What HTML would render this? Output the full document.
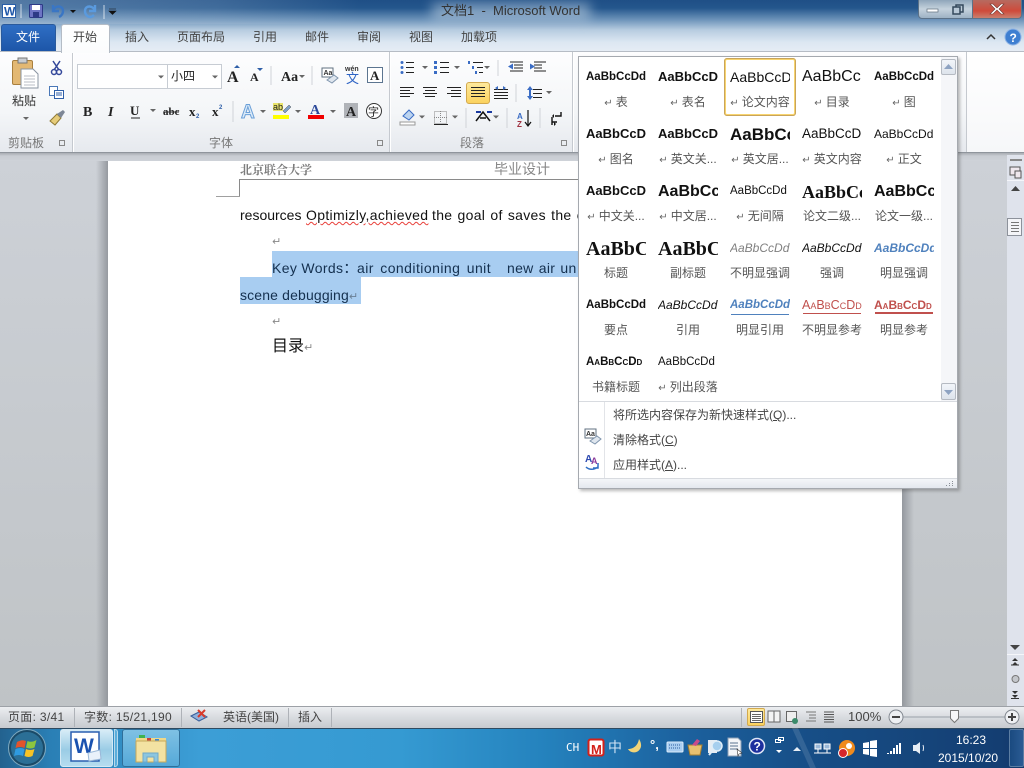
<!DOCTYPE html>
<html><head><meta charset="utf-8"><style>
html,body{margin:0;padding:0;width:1024px;height:768px;overflow:hidden;background:#c8ccd2}
body{position:relative;font-family:"Liberation Sans","Noto Sans CJK SC",sans-serif;font-size:12px;color:#444}
.a{position:absolute}
.t{position:absolute;white-space:nowrap;line-height:16px}
.c{position:absolute;white-space:nowrap;line-height:16px;text-align:center;width:72px;color:#555;font-size:12px;overflow:hidden}
.c i{font-style:normal;color:#666;font-size:10px;font-family:"DejaVu Sans",sans-serif;margin-right:3px}
.s{position:absolute;white-space:nowrap;overflow:hidden;width:60px;height:22px;line-height:22px;color:#111}
.sv{position:absolute;left:0;top:0;font-family:"Liberation Sans","Noto Sans CJK SC",sans-serif}
</style></head><body>
<!-- title/tab area -->
<div class="a" style="left:0;top:0;width:1024px;height:52px;background:linear-gradient(180deg,#1f4f86 0,#24568c 8px,#6f95bb 20px,#b7cce0 30px,#dce7f2 42px,#e6edf5 52px)"></div>
<div class="a" style="left:0;top:0;width:360px;height:24px;background:linear-gradient(90deg,rgba(180,200,220,.35),rgba(180,200,220,.2) 60%,rgba(180,200,220,0))"></div>
<div class="a" style="left:432px;top:3px;width:158px;height:17px;background:rgba(200,216,232,.55);filter:blur(6px)"></div>
<div class="t" style="left:441px;top:3px;font-size:13px;color:#333">文档1 &nbsp;-&nbsp; Microsoft Word</div>
<!-- window buttons -->
<div class="a" style="left:918px;top:-1px;width:27px;height:18px;border:1px solid #5c7288;border-radius:0 0 0 4px;background:linear-gradient(180deg,#8fa5ba,#c5d2dd 50%,#9eb2c4)"></div>
<div class="a" style="left:946px;top:-1px;width:26px;height:18px;border:1px solid #5c7288;border-left:0;background:linear-gradient(180deg,#8fa5ba,#c5d2dd 50%,#9eb2c4)"></div>
<div class="a" style="left:973px;top:-1px;width:48px;height:18px;border:1px solid #5c7288;border-left:0;border-radius:0 0 4px 0;background:linear-gradient(180deg,#b66a60,#cf4a3a 60%,#c9806f)"></div>
<!-- tabs -->
<div class="a" style="left:1px;top:24px;width:55px;height:27px;border-radius:3px 3px 0 0;background:linear-gradient(180deg,#2f6ec4,#1d56a8);border:1px solid #2a5a9c;border-bottom:0;box-sizing:border-box"></div>
<div class="a" style="left:61px;top:24px;width:49px;height:29px;border-radius:3px 3px 0 0;background:linear-gradient(180deg,#fff,#fbfcfd);border:1px solid #b4bcc6;border-bottom:0;box-sizing:border-box;z-index:3"></div>
<div class="t" style="left:16px;top:29px;color:#fff;font-size:12px">文件</div>
<div class="t" style="left:73px;top:29px;z-index:4">开始</div>
<div class="t" style="left:125px;top:29px">插入</div>
<div class="t" style="left:177px;top:29px">页面布局</div>
<div class="t" style="left:253px;top:29px">引用</div>
<div class="t" style="left:305px;top:29px">邮件</div>
<div class="t" style="left:357px;top:29px">审阅</div>
<div class="t" style="left:409px;top:29px">视图</div>
<div class="t" style="left:461px;top:29px">加载项</div>
<!-- ribbon -->
<div class="a" style="left:0;top:51px;width:1024px;height:102px;box-sizing:border-box;border-top:1px solid #b6bcc5;border-bottom:1px solid #8f959c;background:linear-gradient(180deg,#fdfdfe,#f4f6f8 60%,#e6e9ee)"></div>
<div class="a" style="left:0;top:153px;width:1024px;height:8px;background:linear-gradient(180deg,#a9adb3,#c8ccd2 3px,#ced2d8)"></div>
<div class="a" style="left:72px;top:52px;width:1px;height:100px;background:#c5c9cf;box-shadow:1px 0 0 #fff"></div>
<div class="a" style="left:389px;top:52px;width:1px;height:100px;background:#c5c9cf;box-shadow:1px 0 0 #fff"></div>
<div class="a" style="left:572px;top:52px;width:1px;height:100px;background:#c5c9cf;box-shadow:1px 0 0 #fff"></div>
<div class="a" style="left:966px;top:52px;width:1px;height:100px;background:#c5c9cf"></div>
<div class="a" style="left:967px;top:52px;width:57px;height:100px;background:linear-gradient(180deg,#fff,#f6f7f9)"></div>
<div class="t" style="left:8px;top:135px;color:#777">剪贴板</div>
<div class="t" style="left:209px;top:135px;color:#777">字体</div>
<div class="t" style="left:460px;top:135px;color:#777">段落</div>
<div class="t" style="left:12px;top:93px;color:#333">粘贴</div>
<div class="a" style="left:77px;top:64px;width:145px;height:25px;box-sizing:border-box;border:1px solid #c7ccd3;background:#fff"></div>
<div class="a" style="left:167px;top:64px;width:1px;height:25px;background:#c7ccd3"></div>
<div class="t" style="left:171px;top:68px;color:#222">小四</div>
<div class="a" style="left:466px;top:82px;width:24px;height:22px;box-sizing:border-box;border:1px solid #d2a94f;border-radius:3px;background:linear-gradient(180deg,#fde99c,#fbd25e)"></div>

<!-- document -->
<div class="a" style="left:0;top:161px;width:1007px;height:545px;background:linear-gradient(180deg,#cdd1d7,#bfc3c6)"></div>
<div class="a" style="left:96px;top:161px;width:12px;height:545px;background:linear-gradient(90deg,rgba(150,154,160,0),rgba(140,144,150,.85))"></div>
<div class="a" style="left:902px;top:161px;width:12px;height:545px;background:linear-gradient(270deg,rgba(150,154,160,0),rgba(140,144,150,.85))"></div>
<div class="a" style="left:108px;top:161px;width:794px;height:545px;background:#fff"></div>
<div class="a" style="left:272px;top:251px;width:320px;height:26px;background:#a8cdf1"></div>
<div class="a" style="left:240px;top:277px;width:121px;height:27px;background:#a8cdf1"></div>
<div class="t" style="left:240px;top:162px;font:bold 12px/16px 'Noto Serif CJK SC',serif;color:#7c7c7c">北京联合大学</div>
<div class="t" style="left:494px;top:161px;font-size:14px;color:#888">毕业设计</div>
<div class="a" style="left:239px;top:179px;width:663px;height:1px;background:#8a8a8a"></div>
<div class="a" style="left:239px;top:179px;width:1px;height:18px;background:#8a8a8a"></div>
<div class="a" style="left:216px;top:196px;width:24px;height:1px;background:#a0a0a0"></div>
<div class="t" style="left:240px;top:207px;font-size:14px;color:#111">resources</div>
<div class="t" style="left:306px;top:207px;font-size:14px;color:#111;letter-spacing:.33px;text-decoration:underline wavy #e8403a;text-decoration-thickness:1px">Optimizly,achieved</div>
<div class="t" style="left:432px;top:207px;font-size:14px;color:#111;letter-spacing:.3px;word-spacing:1px">the goal of saves the e</div>
<div class="t" style="left:272px;top:260px;font-size:14px;color:#14304f;letter-spacing:.35px">Key Words：</div>
<div class="t" style="left:357px;top:260px;font-size:14px;color:#14304f;letter-spacing:.45px;word-spacing:2px">air conditioning unit</div>
<div class="t" style="left:507px;top:260px;font-size:14px;color:#14304f;letter-spacing:.3px;word-spacing:1px">new air un</div>
<div class="t" style="left:240px;top:287px;font-size:14px;color:#14304f;letter-spacing:.15px">scene debugging<span style="font:11px 'DejaVu Sans',sans-serif;color:#6a7f95;letter-spacing:0">↵</span></div>
<div class="t" style="left:272px;top:339px;font-size:16px;color:#111">目录<span style="font:11px 'DejaVu Sans',sans-serif;color:#888">↵</span></div>
<div class="t" style="left:272px;top:234px;font:11px/16px 'DejaVu Sans',sans-serif;color:#888">↵</div>
<div class="t" style="left:272px;top:314px;font:11px/16px 'DejaVu Sans',sans-serif;color:#888">↵</div>

<!-- right scrollbar -->
<div class="a" style="left:1007px;top:155px;width:17px;height:551px;background:#dfe3ec"></div>
<div class="a" style="left:1007px;top:218px;width:15px;height:18px;box-sizing:border-box;border:1px solid #8d929b;background:#f4f5f8"></div>
<div class="a" style="left:1007px;top:180px;width:17px;height:1px;background:#f5f6fa"></div>
<div class="a" style="left:1007px;top:654px;width:17px;height:1px;background:#f5f6fa"></div>

<!-- status bar -->
<div class="a" style="left:0;top:706px;width:1024px;height:22px;box-sizing:border-box;border-top:1px solid #9da1a7;background:linear-gradient(180deg,#eceef1,#dadde1 45%,#c7cacf)"></div>
<div class="t" style="left:8px;top:709px;letter-spacing:.3px">页面: 3/41</div>
<div class="t" style="left:84px;top:709px;letter-spacing:.3px">字数: 15/21,190</div>
<div class="t" style="left:223px;top:709px">英语(美国)</div>
<div class="t" style="left:298px;top:709px">插入</div>
<div class="t" style="left:848px;top:709px;font-size:13px">100%</div>
<div class="a" style="left:74px;top:708px;width:1px;height:19px;background:#aeb2b8"></div>
<div class="a" style="left:181px;top:708px;width:1px;height:19px;background:#aeb2b8"></div>
<div class="a" style="left:288px;top:708px;width:1px;height:19px;background:#aeb2b8"></div>
<div class="a" style="left:331px;top:708px;width:1px;height:19px;background:#aeb2b8"></div>
<div class="a" style="left:741px;top:708px;width:1px;height:19px;background:#aeb2b8"></div>
<div class="a" style="left:747px;top:708px;width:18px;height:18px;box-sizing:border-box;border:1px solid #d2a94f;border-radius:2px;background:linear-gradient(180deg,#fde99c,#fbd25e)"></div>

<!-- taskbar -->
<div class="a" style="left:0;top:728px;width:1024px;height:40px;background:linear-gradient(90deg,#23628f 0,#2a7fb5 50px,#3c9ed6 200px,#359ad2 400px,#2583be 540px,#1c629f 680px,#174f88 800px,#143e72 1000px,#12386a 1024px)"></div>
<div class="a" style="left:0;top:728px;width:1024px;height:1px;background:#2f4a60"></div>
<div class="a" style="left:60px;top:729px;width:53px;height:38px;box-sizing:border-box;border:1px solid #d5e9f5;border-radius:3px;background:linear-gradient(180deg,#d7ecf7,#9acce5 55%,#b5dcef)"></div>
<div class="a" style="left:122px;top:729px;width:58px;height:38px;box-sizing:border-box;border:1px solid #2f6f9a;border-radius:3px;background:linear-gradient(180deg,#7fc1e4,#55a9d8)"></div>
<div class="a" style="left:114px;top:729px;width:4px;height:38px;box-sizing:border-box;border:1px solid #b5d8ec;border-radius:0 3px 3px 0;background:#5aaedb"></div>
<div class="a" style="left:1009px;top:729px;width:15px;height:38px;box-sizing:border-box;border:1px solid #5c7ea3;border-radius:2px;background:linear-gradient(90deg,#1a4a80,#2a5b93)"></div>
<div class="t" style="left:566px;top:740px;font:11px/16px 'DejaVu Sans Mono',monospace;color:#fff">CH</div>
<div class="t" style="left:608px;top:739px;font-size:14px;color:#cfe3f5">中</div>
<div class="t" style="left:650px;top:737px;font-size:13px;color:#fff;font-weight:bold">°,</div>
<div class="t" style="left:956px;top:732px;font-size:12px;color:#fff">16:23</div>
<div class="t" style="left:938px;top:750px;font-size:12px;color:#fff">2015/10/20</div>

<!-- icons -->
<svg class="sv" width="1024" height="768" viewBox="0 0 1024 768" style="pointer-events:none">
 <!-- QAT -->
 <rect x="2.5" y="4.5" width="13" height="13" fill="#fff" stroke="#2a5fa8"/><text x="4" y="15.5" font-size="12" font-weight="bold" fill="#1d56a8">W</text>
 <line x1="21" y1="4" x2="21" y2="18" stroke="#fff" opacity=".7"/>
 <rect x="29.5" y="4.5" width="13" height="13" rx="1" fill="#6d74c4" stroke="#2d3a86"/><rect x="32" y="5" width="8" height="5" fill="#fff"/><rect x="33" y="12" width="6" height="5" fill="#2d3a86"/>
 <path d="M53 5v6h6M53 11c2-6 10-6 10 0 0 3-2 5-4 6" fill="none" stroke="#3a76c4" stroke-width="2.4"/>
 <path d="M70 10h6l-3 3z" fill="#111"/>
 <path d="M95 5v6h-6M95 11c-2-6-10-6-10 0 0 4 3 6 5 6s3-1 4-2" fill="none" stroke="#5a9ade" stroke-width="2.4"/>
 <line x1="104" y1="5" x2="104" y2="19" stroke="#fff" opacity=".7"/>
 <path d="M109 9h7M109 11h7l-3.500 3.500z" fill="#111" stroke="#111" stroke-width=".6"/>
 <!-- window button glyphs -->
 <rect x="927" y="9" width="11" height="3" fill="#fff" stroke="#5d6d7c" stroke-width=".7"/>
 <rect x="956" y="5" width="7" height="7" fill="none" stroke="#34495c" stroke-width="1.5"/><rect x="953" y="7" width="7" height="7" fill="#b8c8d6" stroke="#34495c" stroke-width="1.500"/>
 <path d="M993 4l4 4 4-4h3l-5 5 5 5h-3l-4-4-4 4h-3l5-5-5-5z" fill="#fff" stroke="#6b3a34" stroke-width=".6"/>
 <!-- help -->
 <path d="M987 39l4-4 4 4" fill="none" stroke="#333" stroke-width="1.500"/>
 <circle cx="1013" cy="37" r="8" fill="#3f7fd1" stroke="#8fb4e5"/><text x="1009.500" y="42" font-size="12" font-weight="bold" fill="#fff">?</text>
 <!-- paste -->
 <rect x="12.500" y="60.500" width="20" height="24" rx="1.500" fill="#e3b873" stroke="#a97f3d"/><rect x="18" y="58" width="9" height="5" fill="#c9cdd2" stroke="#777"/>
 <path d="M21 69h12l5 5v14H21z" fill="#fff" stroke="#8a94a2"/><path d="M24 76h11M24 79h11M24 82h11M24 85h11" stroke="#b8bec6"/>
 <path d="M23 117h6l-3 3z" fill="#666"/>
 <!-- cut copy painter -->
 <path d="M53 61l6 9M60 61l-6 9" stroke="#33479a" stroke-width="1.500"/><circle cx="54" cy="72" r="2.500" fill="none" stroke="#33479a" stroke-width="1.500"/><circle cx="59" cy="72" r="2.500" fill="none" stroke="#33479a" stroke-width="1.500"/>
 <rect x="49.500" y="86.500" width="8" height="9" fill="#fff" stroke="#4a78b8"/><rect x="54.500" y="90.500" width="9" height="8" fill="#fff" stroke="#2f5fa8"/><path d="M56 93h6M56 95h6" stroke="#2f5fa8"/>
 <path d="M50 121l7-7 4 4-6 7z" fill="#e6cc7a" stroke="#8f7a35"/><path d="M57 114l6-4 2 2-4 6z" fill="#7d8796"/>
 <!-- font boxes arrows -->
 <path d="M158 75.500h6l-3 3z" fill="#666"/><path d="M212 75.500h6l-3 3z" fill="#666"/>
 <g font-family="Liberation Serif" font-weight="bold" fill="#222">
  <text x="227" y="82" font-size="16">A</text>
  <text x="250" y="81" font-size="12">A</text>
  <text x="281" y="81" font-size="14">Aa</text>
  <text x="83" y="116" font-size="14">B</text>
  <text x="108" y="116" font-size="14" font-style="italic">I</text>
  <text x="130" y="115" font-size="13">U</text>
  <text x="163" y="115" font-size="11">abc</text>
  <text x="189" y="116" font-size="13">x</text>
  <text x="212" y="116" font-size="13">x</text>
 </g>
 <path d="M234 68l3-3 3 3z" fill="#2f5fa8"/><path d="M257 69l3 3 3-3z" fill="#2f5fa8" transform="translate(0,-1)"/>
 <path d="M299 75h6l-3 3z" fill="#666"/>
 <line x1="271" y1="66" x2="271" y2="85" stroke="#d0d3d8"/><line x1="312" y1="66" x2="312" y2="85" stroke="#d0d3d8"/>
 <line x1="131" y1="118" x2="140" y2="118" stroke="#222"/><path d="M150 109h6l-3 3z" fill="#666"/><line x1="163" y1="112" x2="179" y2="112" stroke="#333"/>
 <text x="196" y="118" font-size="6" fill="#2f5fa8" font-weight="bold">2</text><text x="219" y="109" font-size="6" fill="#2f5fa8" font-weight="bold">2</text>
 <line x1="233" y1="101" x2="233" y2="122" stroke="#d0d3d8"/>
 <text x="241" y="118" font-size="19" font-weight="bold" fill="#dcebf8" stroke="#6a9fd8">A</text>
 <path d="M260 110h6l-3 3z" fill="#666"/>
 <rect x="273" y="103" width="10" height="8" fill="#e8e36a"/><text x="273" y="110" font-size="9" fill="#222">ab</text><path d="M283 111l6-6 2 2-6 6z" fill="#7da0c8" stroke="#555" stroke-width=".5"/><rect x="273" y="115" width="16" height="4" fill="#ffff00"/>
 <path d="M295 110h6l-3 3z" fill="#666"/>
 <text x="310" y="114" font-size="14" font-weight="bold" fill="#2d4a9a" font-family="Liberation Serif">A</text><rect x="308" y="115" width="16" height="4" fill="#f00000"/>
 <path d="M330 110h6l-3 3z" fill="#666"/>
 <!-- clear format, wen, A box, grey A, char circle -->
 <rect x="322" y="68" width="11" height="9" fill="#fff" stroke="#607080"/><text x="323.500" y="75" font-size="7" fill="#333" font-weight="bold">Aa</text><path d="M327 80l7-5 4 3-6 5z" fill="#dfe6ee" stroke="#7f95ad"/>
 <text x="345" y="71" font-size="7" font-weight="bold" fill="#333">wén</text><text x="346" y="83" font-size="13" fill="#2d63c4">文</text>
 <rect x="367.500" y="67.500" width="15" height="15" fill="#fff" stroke="#5c7590"/><text x="370" y="80" font-size="13" font-weight="bold" fill="#222" font-family="Liberation Serif">A</text>
 <rect x="344" y="103" width="14" height="15" fill="#b0b3b8"/><text x="346" y="116" font-size="14" font-weight="bold" fill="#222" font-family="Liberation Serif">A</text>
 <circle cx="374" cy="111" r="7.500" fill="#fff" stroke="#333"/><text x="368" y="115.500" font-size="11" fill="#222">字</text>
 <!-- launchers -->
 <g fill="none" stroke="#888"><rect x="59.500" y="140.500" width="5" height="5"/><rect x="377.500" y="140.500" width="5" height="5"/><rect x="561.500" y="140.500" width="5" height="5"/></g>
 <!-- paragraph -->
 <g stroke="#222" stroke-width="1">
  <path d="M406 62.500h8M406 67.500h8M406 72.500h8M440 62.500h9M440 67.500h9M440 72.500h9"/>
  <path d="M473 62.500h10M477 67.500h6M479 72.500h4"/>
  <path d="M510 62h13M514 65h9M514 68h9M510 71h13M534 62h12M534 65h8M534 68h8M534 71h12"/>
  <path d="M400 87.500h14M400 90.500h10M400 93.500h14M400 96.500h10"/>
  <path d="M423 87.500h14M425 90.500h10M423 93.500h14M425 96.500h10"/>
  <path d="M447 87.500h14M451 90.500h10M447 93.500h14M451 96.500h10"/>
  <path d="M471 87.500h14M471 90.500h14M471 93.500h14M471 96.500h14" stroke-width="1"/>
  <path d="M494 89.500h14M494 92.500h14M494 95.500h14M494 98.500h14"/>
  <path d="M533 89.500h9M533 93.500h9M533 97.500h9"/>
  <path d="M434 124.500h14"/>
 </g>
 <g fill="#3a6cc4"><circle cx="402" cy="62.500" r="1.500"/><circle cx="402" cy="67.500" r="1.500"/><circle cx="402" cy="72.500" r="1.500"/>
  <rect x="434" y="61" width="3" height="3"/><rect x="434" y="66" width="3" height="3"/><rect x="434" y="71" width="3" height="3"/>
  <rect x="468" y="61" width="2" height="3"/><rect x="472" y="66" width="2" height="3"/><rect x="475" y="71" width="2" height="3"/>
  <path d="M508 66.500l5-3v6zM530 63.500l5 3-5 3z"/>
  <path d="M527 90l3-4 3 4zM527 96l3 4 3-4z"/><rect x="529" y="90" width="2" height="6"/>
  <path d="M495 88l3-2v4zM506 88l-3-2v4z"/>
 </g>
 <path d="M422 66h6l-3 3zM454 66h6l-3 3zM484 66h6l-3 3zM546 91h6l-3 3zM419 115.500h6l-3 3zM452 115.500h6l-3 3zM493 115.500h6l-3 3z" fill="#666"/>
 <line x1="498" y1="60" x2="498" y2="76" stroke="#d0d3d8"/><line x1="516" y1="84" x2="516" y2="102" stroke="#d0d3d8"/><line x1="466" y1="108" x2="466" y2="128" stroke="#d0d3d8"/><line x1="507" y1="108" x2="507" y2="128" stroke="#d0d3d8"/><line x1="540" y1="108" x2="540" y2="128" stroke="#d0d3d8"/>
 <path d="M403 116l6-6 5 5-5 5z" fill="#bcd4f0" stroke="#3a6cc4"/><rect x="400" y="122" width="15" height="3" fill="#fff" stroke="#999"/>
 <g stroke="#888" stroke-dasharray="1 1" fill="none"><rect x="434.500" y="111.500" width="12" height="12"/><path d="M440.500 111v12M434 117.500h13"/></g>
 <path d="M476 121l7-9 7 9M480 118h6" fill="none" stroke="#111" stroke-width="1.500"/><path d="M476 112h5M487 112h5" stroke="#1a3aa0" stroke-width="2"/>
 <text x="517" y="119" font-size="8" font-weight="bold" fill="#3a6cc4">A</text><text x="517" y="127" font-size="8" font-weight="bold" fill="#a03040">Z</text><path d="M528 110v15M525 122l3 4 3-4" fill="none" stroke="#111" stroke-width="1.200"/>
 <path d="M561 112v4h-6M557 122h-5M552 117v8" fill="none" stroke="#111" stroke-width="1.400"/><path d="M554 114l-2 2 2 2zM554 122l2 2-2 2z" fill="#111"/>
 <!-- scrollbar glyphs -->
 <rect x="1010" y="159" width="12" height="2" fill="#888"/>
 <rect x="1010" y="167" width="10" height="8" fill="#efe8ee" stroke="#555"/><rect x="1015" y="171" width="6" height="7" fill="#efe8ee" stroke="#555"/>
 <path d="M1011 191l4.500-5 4.500 5z" fill="#444"/><path d="M1010 645h10l-5 5z" fill="#444"/>
 <path d="M1011 222.500h8M1011 225.500h8M1011 228.500h8M1011 231.500h8" stroke="#777"/>
 <path d="M1012 661l3-3 3 3zM1012 665l3-3 3 3z" fill="#333"/><path d="M1011 665h8" stroke="#333"/>
 <circle cx="1015.500" cy="679" r="3.500" fill="#c4c7cc" stroke="#777"/>
 <path d="M1012 695l3 3 3-3zM1012 691l3 3 3-3z" fill="#333"/><path d="M1011 698.500h8" stroke="#333"/>
 <!-- status icons -->
 <path d="M191 716l8-4 8 5-8 4z" fill="#8fb0dc" stroke="#3a5f9a"/><path d="M198 710l7 7M205 710l-7 7" stroke="#d93a2a" stroke-width="2"/>
 <rect x="750.500" y="711.500" width="12" height="11" fill="#fff" stroke="#555"/><path d="M752 714.500h9M752 716.500h9M752 718.500h9M752 720.500h9" stroke="#666"/>
 <path d="M768 711h6v11h-6zM774 711h6v11h-6z" fill="#f4f4f4" stroke="#666"/>
 <rect x="786.500" y="711.500" width="10" height="10" fill="#eee" stroke="#666"/><circle cx="795" cy="721" r="3" fill="#3b8a6a"/>
 <path d="M806 712h10M809 715h7M809 718h7M806 721h10" stroke="#777"/>
 <path d="M824 712h10M824 714.500h10M824 717h10M824 719.500h10M824 722h10" stroke="#555"/>
 <path d="M896 717h116" stroke="#9aa0a8"/>
 <circle cx="896" cy="717" r="7" fill="#eef0f3" stroke="#7f858d"/><path d="M892 717h8" stroke="#444" stroke-width="2"/>
 <circle cx="1012" cy="717" r="7" fill="#eef0f3" stroke="#7f858d"/><path d="M1008 717h8M1012 713v8" stroke="#444" stroke-width="2"/>
 <path d="M950.500 710.500h8v8l-4 4-4-4z" fill="#f7f7f8" stroke="#777"/>
 <!-- start orb -->
 <circle cx="27" cy="748" r="18.500" fill="#1a4a68" stroke="#7fa9bf"/><circle cx="27" cy="748" r="16" fill="#2b6f96"/>
 <path d="M17 742q5-3 9-1l-1.500 7q-4-2-9 0z" fill="#e2542c"/><path d="M27.500 741q4 2 9-1l-2 7.500q-4 2-8.500 0z" fill="#8cc63f"/>
 <path d="M15.500 749q5-2 9 0l-1.500 7q-4-2-9 0z" fill="#2f9be0"/><path d="M26 749q4 2 8.500 0l-2 7q-4 2-8 0z" fill="#f6c325"/>
 <!-- word -->
 <rect x="71" y="732" width="28" height="29" fill="#fff" stroke="#2a5fb0" stroke-width="1.500"/>
 <text x="74" y="753" font-size="21" font-weight="bold" fill="#1a52b0">W</text>
 <path d="M88 753l12-3 1 9-12 2z" fill="#e9f1fa" stroke="#9ab8d8"/>
 <!-- explorer -->
 <path d="M136 738h30v4h-30z" fill="#f0d888"/><rect x="139" y="735" width="6" height="3" fill="#3fb24f"/><rect x="147" y="738" width="4" height="3" fill="#c8423a"/><rect x="155" y="739" width="4" height="3" fill="#3a88d8"/>
 <path d="M136 741h30v21h-30z" fill="#f3e2a2" stroke="#c5a85c"/><path d="M143 762v-9h15v9h-4v-5h-7v5z" fill="#8cc6e0" stroke="#6fa8c8"/>
 <!-- tray -->
 <rect x="588.500" y="739.500" width="15" height="16" rx="2" fill="#fff" stroke="#d3211a" stroke-width="2"/><text x="591" y="754" font-size="13" font-weight="bold" fill="#d3211a">M</text>
 <path d="M639 739c-1 6-5 10-11 10 2 4 9 5 12 0 2-3 1-7-1-10z" fill="#f2d478"/>
 <rect x="667" y="742" width="16" height="10" rx="1" fill="#a9cdf0" stroke="#dcecfa"/><path d="M669 745h12M669 748h12" stroke="#2d5fa0" stroke-dasharray="1 1"/>
 <path d="M688 745h14l-2 10h-10z" fill="#e7c070" stroke="#a67f30"/><path d="M692 745l5-6 3 2-4 5" fill="#c84a8a"/>
 <rect x="708" y="740" width="9" height="13" fill="#e6ecf2"/><circle cx="717" cy="746" r="5" fill="#a6cfee" stroke="#e0eef8" stroke-width="1.500"/><path d="M713 750l-4 5" stroke="#e0eef8" stroke-width="2"/>
 <path d="M728 738h10l3 3v15h-13z" fill="#f3f5f8" stroke="#8ca0b5"/><path d="M730 743h8M730 746h8M730 749h8" stroke="#5a7290"/><path d="M737 749l5 4-3 1-1 2z" fill="#fff" stroke="#333" stroke-width=".6"/>
 <circle cx="757" cy="746" r="7.500" fill="#1d2f9e" stroke="#dfe6f5" stroke-width="1.500"/><text x="753.500" y="750.500" font-size="12" font-weight="bold" fill="#fff">?</text>
 <rect x="775.500" y="739.500" width="5" height="3" fill="none" stroke="#fff"/><rect x="778.500" y="737.500" width="5" height="3" fill="none" stroke="#fff"/><path d="M776 750h6l-3 3z" fill="#fff"/>
 <path d="M793 751l4-4 4 4z" fill="#e6edf5"/>
 <rect x="815" y="744" width="6" height="5" fill="#9ab8d8" stroke="#fff"/><rect x="824" y="744" width="6" height="5" fill="#9ab8d8" stroke="#fff"/><path d="M814 753h17M818 749v4M827 749v4" stroke="#fff"/>
 <circle cx="847" cy="748" r="8" fill="#f08a1d"/><circle cx="849" cy="746" r="3" fill="#fff"/><circle cx="843" cy="753" r="4.500" fill="#d8262a" stroke="#fff"/>
 <path d="M863 743l6-1v6h-6zM870 741l7-1v8h-7zM863 749h6v6l-6-1zM870 749h7v8l-7-1z" fill="#fff"/>
 <path d="M887 753h2v1h-2zM890 751h2v3h-2zM893 748h2v6h-2zM896 745h2v9h-2zM899 743h2v11h-2z" fill="#fff"/>
 <path d="M913 745h3l4-3v12l-4-3h-3z" fill="#e6edf5"/><path d="M923 745q1 3 0 6" fill="none" stroke="#e6edf5"/>
 <path d="M792 728l18 40h6l-18-40z" fill="#fff" opacity=".12"/>
</svg>
<!-- styles popup -->
<div class="a" style="left:578px;top:56px;width:380px;height:433px;box-sizing:border-box;border:1px solid #a5a9af;background:#fff;box-shadow:2px 2px 3px rgba(80,80,80,.4);z-index:20;overflow:hidden">
 <div class="a" style="left:362px;top:0;width:17px;height:344px;background:#f5f6f9"></div>
 <div class="a" style="left:362px;top:2px;width:15px;height:16px;box-sizing:border-box;border:1px solid #b5bac2;border-radius:2px;background:linear-gradient(180deg,#f2f5fa,#dde3ec)"></div>
 <div class="a" style="left:362px;top:326px;width:15px;height:17px;box-sizing:border-box;border:1px solid #b5bac2;border-radius:2px;background:linear-gradient(180deg,#f2f5fa,#dde3ec)"></div>
 <svg class="a" style="left:362px;top:0" width="16" height="345"><path d="M3 12l4.500-5 4.500 5z" fill="#8ea3c2"/><path d="M3 333h9l-4.500 5z" fill="#8ea3c2"/></svg>
 <div class="a" style="left:145px;top:1px;width:72px;height:58px;box-sizing:border-box;border:2px solid #f7d46f;outline:1px solid #c9a45a;outline-offset:-1px;border-radius:3px;background:#fff"></div>

 <!-- row1 -->
 <div class="s" style="left:7px;top:9px;font-size:11.500px;font-weight:bold">AaBbCcDd</div>
 <div class="s" style="left:79px;top:9px;font-size:13px;font-weight:bold">AaBbCcDd</div>
 <div class="s" style="left:151px;top:9px;font-size:14px">AaBbCcD</div>
 <div class="s" style="left:223px;top:9px;font-size:16px;width:60px">AaBbCc</div>
 <div class="s" style="left:295px;top:9px;font-size:11.500px;font-weight:bold">AaBbCcDd</div>
 <div class="c" style="left:1px;top:37px"><i>↵</i>表</div>
 <div class="c" style="left:73px;top:37px"><i>↵</i>表名</div>
 <div class="c" style="left:145px;top:37px"><i>↵</i>论文内容</div>
 <div class="c" style="left:217px;top:37px"><i>↵</i>目录</div>
 <div class="c" style="left:289px;top:37px"><i>↵</i>图</div>
 <!-- row2 -->
 <div class="s" style="left:7px;top:66px;font-size:13px;font-weight:bold">AaBbCcDd</div>
 <div class="s" style="left:79px;top:66px;font-size:13px;font-weight:bold">AaBbCcDd</div>
 <div class="s" style="left:151px;top:67px;font-size:17px;font-weight:bold">AaBbCcDd</div>
 <div class="s" style="left:223px;top:66px;font-size:13.500px">AaBbCcD</div>
 <div class="s" style="left:295px;top:66px;font-size:12px">AaBbCcDd</div>
 <div class="c" style="left:1px;top:94px"><i>↵</i>图名</div>
 <div class="c" style="left:73px;top:94px"><i>↵</i>英文关...</div>
 <div class="c" style="left:145px;top:94px"><i>↵</i>英文居...</div>
 <div class="c" style="left:217px;top:94px"><i>↵</i>英文内容</div>
 <div class="c" style="left:289px;top:94px"><i>↵</i>正文</div>
 <!-- row3 -->
 <div class="s" style="left:7px;top:123px;font-size:13px;font-weight:bold">AaBbCcDd</div>
 <div class="s" style="left:79px;top:124px;font-size:16px;font-weight:bold">AaBbCcDd</div>
 <div class="s" style="left:151px;top:123px;font-size:11.500px">AaBbCcDd</div>
 <div class="s" style="left:223px;top:124px;font:bold 18px/22px 'Liberation Serif',serif">AaBbCcDd</div>
 <div class="s" style="left:295px;top:124px;font-size:16px;font-weight:bold">AaBbCcDd</div>
 <div class="c" style="left:1px;top:151px"><i>↵</i>中文关...</div>
 <div class="c" style="left:73px;top:151px"><i>↵</i>中文居...</div>
 <div class="c" style="left:145px;top:151px"><i>↵</i>无间隔</div>
 <div class="c" style="left:217px;top:151px">论文二级...</div>
 <div class="c" style="left:289px;top:151px">论文一级...</div>
 <!-- row4 -->
 <div class="s" style="left:7px;top:181px;font:bold 20px/22px 'Liberation Serif',serif">AaBbCcDd</div>
 <div class="s" style="left:79px;top:181px;font:bold 20px/22px 'Liberation Serif',serif">AaBbCcDd</div>
 <div class="s" style="left:151px;top:180px;font-size:12px;font-style:italic;color:#808080">AaBbCcDd</div>
 <div class="s" style="left:223px;top:180px;font-size:12px;font-style:italic">AaBbCcDd</div>
 <div class="s" style="left:295px;top:180px;font-size:12px;font-style:italic;color:#4f81bd;font-weight:bold">AaBbCcDd</div>
 <div class="c" style="left:1px;top:208px">标题</div>
 <div class="c" style="left:73px;top:208px">副标题</div>
 <div class="c" style="left:145px;top:208px">不明显强调</div>
 <div class="c" style="left:217px;top:208px">强调</div>
 <div class="c" style="left:289px;top:208px">明显强调</div>
 <!-- row5 -->
 <div class="s" style="left:7px;top:237px;font-size:11.500px;font-weight:bold">AaBbCcDd</div>
 <div class="s" style="left:79px;top:237px;font-size:12px;font-style:italic">AaBbCcDd</div>
 <div class="s" style="left:151px;top:237px;font-size:11.500px;font-style:italic;color:#4f81bd;font-weight:bold">AaBbCcDd</div>
 <div class="a" style="left:152px;top:257px;width:58px;height:1px;background:#4f81bd"></div>
 <div class="s" style="left:223px;top:237px;font-size:12.500px;font-variant:small-caps;color:#c0504d">AaBbCcDd</div>
 <div class="a" style="left:224px;top:256px;width:58px;height:1px;background:#c0504d"></div>
 <div class="s" style="left:295px;top:237px;font-size:12px;font-variant:small-caps;color:#c0504d;font-weight:bold">AaBbCcDd</div>
 <div class="a" style="left:296px;top:255px;width:58px;height:2px;background:#c0504d"></div>
 <div class="c" style="left:1px;top:265px">要点</div>
 <div class="c" style="left:73px;top:265px">引用</div>
 <div class="c" style="left:145px;top:265px">明显引用</div>
 <div class="c" style="left:217px;top:265px">不明显参考</div>
 <div class="c" style="left:289px;top:265px">明显参考</div>
 <!-- row6 -->
 <div class="s" style="left:7px;top:294px;font-size:11.500px;font-variant:small-caps;font-weight:bold">AaBbCcDd</div>
 <div class="s" style="left:79px;top:294px;font-size:11.500px">AaBbCcDd</div>
 <div class="c" style="left:1px;top:322px">书籍标题</div>
 <div class="c" style="left:73px;top:322px"><i>↵</i>列出段落</div>

 <!-- menu -->
 <div class="a" style="left:0;top:344px;width:378px;height:1px;background:#d8dbe0"></div>
 <div class="a" style="left:25px;top:345px;width:1px;height:76px;background:#e2e4e8"></div>
 <div class="a" style="left:0;top:421px;width:378px;height:10px;box-sizing:border-box;border-top:1px solid #d8dbe0;background:linear-gradient(180deg,#f4f6f9,#e4e8ee)"></div>
 <div class="t" style="left:34px;top:350px">将所选内容保存为新快速样式(<u>Q</u>)...</div>
 <div class="t" style="left:34px;top:375px">清除格式(<u>C</u>)</div>
 <div class="t" style="left:34px;top:400px">应用样式(<u>A</u>)...</div>
 <svg class="a" style="left:0;top:370px" width="26" height="50">
  <rect x="6" y="2" width="11" height="9" fill="#fff" stroke="#607080"/><text x="7" y="9" font-size="7" font-weight="bold" fill="#333">Aa</text><path d="M11 14l7-5 4 3-6 5z" fill="#dfe6ee" stroke="#7f95ad"/>
  <text x="6" y="35" font-size="10" font-weight="bold" fill="#2d4ab0">A</text><text x="12" y="37" font-size="9" font-weight="bold" fill="#8a3a9a">A</text><path d="M7 40c3 3 8 3 12 0M19 36v5h-5" fill="none" stroke="#2f6fc4" stroke-width="1.500"/>
 </svg>
 <svg class="a" style="left:366px;top:423px" width="10" height="7"><path d="M7 1h1v1H7zM4 3h1v1H4zM7 3h1v1H7zM1 5h1v1H1zM4 5h1v1H4zM7 5h1v1H7z" fill="#8a8f96"/></svg>
</div>
</body></html>
